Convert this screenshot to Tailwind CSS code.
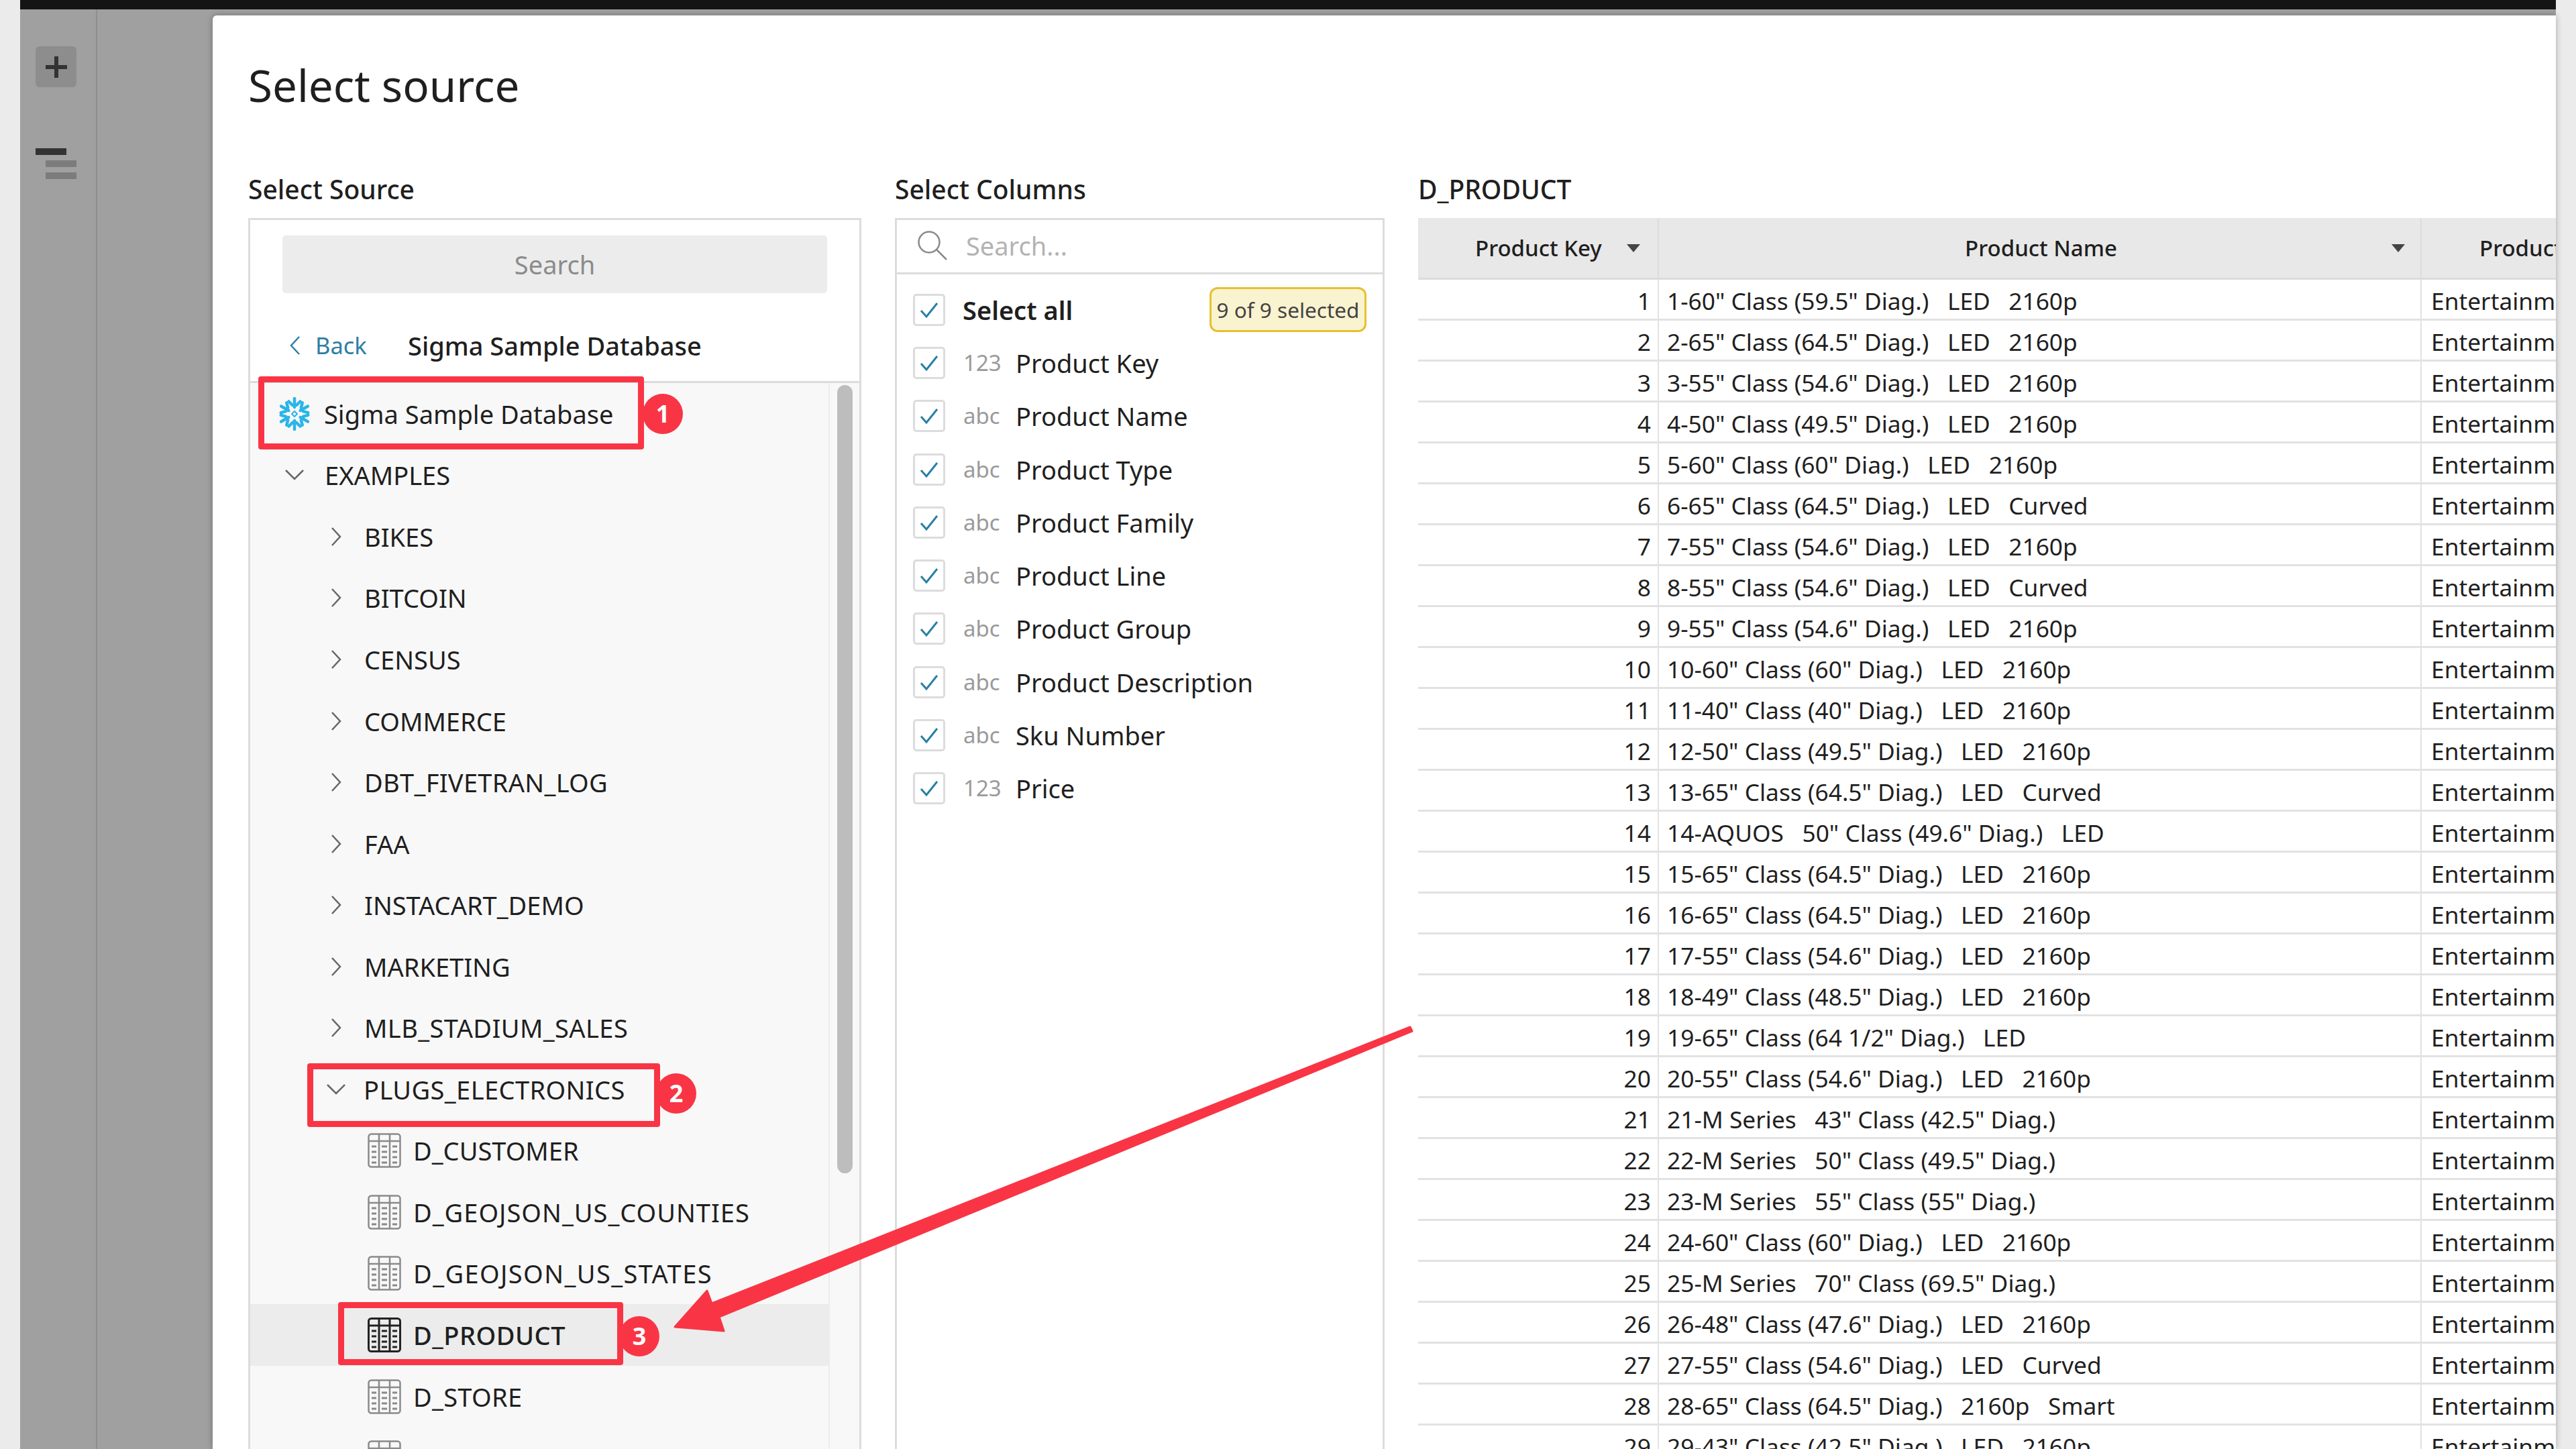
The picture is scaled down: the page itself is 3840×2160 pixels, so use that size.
<!DOCTYPE html>
<html><head><meta charset="utf-8"><script src="https://cdn.jsdelivr.net/npm/@tailwindcss/browser@4"></script></head>
<body class="m-0 bg-[#ebebeb]">
<div class="relative w-[3840px] h-[2160px] overflow-hidden flex bg-[#ebebeb] font-['Noto_Sans',sans-serif] text-[#1f1f1f]">
<div class="w-[30px] shrink-0"></div>
<div class="w-[3780px] flex flex-col">
<div class="h-[14px] bg-[#141414] shrink-0"></div>
<div class="flex-1 flex bg-[#a0a0a0] min-h-0">
<div class="w-[115px] shrink-0 border-r-2 border-[#8f8f8f] pl-[23px] pt-[55px]">
<div class="w-[61px] h-[61px] rounded-[6px] bg-[#8d8d8d] flex items-center justify-center">
<svg width="32" height="32" viewBox="0 0 32 32"><path d="M13 0h6v13h13v6H19v13h-6V19H0v-6h13z" fill="#333"/></svg></div>
<div class="mt-[91px] w-[61px] flex flex-col gap-[8px]"><div class="w-[46px] h-[10px] bg-[#333]"></div><div class="w-[46px] h-[10px] ml-[15px] bg-[#7c7c7c]"></div><div class="w-[46px] h-[10px] ml-[15px] bg-[#7c7c7c]"></div></div>
</div>
<div class="w-[172px] shrink-0"></div>
<div class="w-[3493px] mt-[9px] bg-white rounded-tl-[6px] shadow-[0_0_10px_rgba(0,0,0,0.3)] pl-[53px] overflow-hidden">
<h1 class="h-[227px] pt-[60px] text-[65.5px] leading-[88px] font-normal">Select source</h1>
<div class="flex gap-[50px]">

<section class="w-[914px] shrink-0">
<h2 class="h-[75px] text-[39px] font-medium leading-[64px]">Select Source</h2>
<div class="border-[3px] border-b-0 border-[#dcdcdc]">
<div class="h-[243px] border-b-[3px] border-[#dcdcdc] bg-white">
<div class="pt-[23px] px-[48px]"><div class="h-[86px] rounded-[5px] bg-[#ececec] flex items-center justify-center text-[38px] text-[#8b8b8b]">Search</div></div>
<div class="flex items-center h-[70px] mt-[43px] pl-[58px]">
<svg width="18" height="32" viewBox="0 0 18 32" fill="none" stroke="#2f7fa5" stroke-width="2.5"><path d="M15 3 3 16l12 13"/></svg>
<span class="ml-[21px] w-[138px] text-[34.5px] text-[#2f7fa5]">Back</span>
<span class="text-[38px] font-medium">Sigma Sample Database</span></div>
</div>
<div class="flex h-[1700px] bg-[#f8f8f8]">
<ul class="w-[864px] shrink-0 border-r-[2px] border-[#ececec] text-[38px] leading-[50px]">
<li class="h-[91.56px] flex items-center pl-[41px]"><svg class="mr-[19px]" width="50" height="50" viewBox="-25 -25 50 50" fill="none" stroke="#29b5e8" stroke-width="4.5" stroke-linecap="round"><g id="a"><path d="M0-23V-10M-8.5-18.5-3-13M8.5-18.5 3-13"/></g><use href="#a" transform="rotate(60)"/><use href="#a" transform="rotate(120)"/><use href="#a" transform="rotate(180)"/><use href="#a" transform="rotate(240)"/><use href="#a" transform="rotate(300)"/><path d="M0-4 4 0 0 4-4 0z" stroke-width="2"/></svg>Sigma Sample Database</li>
<li class="h-[91.56px] flex items-center pl-[51px]"><svg class="mr-[30px]" width="30" height="18" viewBox="0 0 30 18" fill="none" stroke="#666" stroke-width="2.5"><path d="M2 2l13 13L28 2"/></svg>EXAMPLES</li>
<li class="h-[91.56px] flex items-center pl-[119px]"><svg class="mr-[33px]" width="18" height="30" viewBox="0 0 18 30" fill="none" stroke="#666" stroke-width="2.5"><path d="M3 2l12 13L3 28"/></svg>BIKES</li>
<li class="h-[91.56px] flex items-center pl-[119px]"><svg class="mr-[33px]" width="18" height="30" viewBox="0 0 18 30" fill="none" stroke="#666" stroke-width="2.5"><path d="M3 2l12 13L3 28"/></svg>BITCOIN</li>
<li class="h-[91.56px] flex items-center pl-[119px]"><svg class="mr-[33px]" width="18" height="30" viewBox="0 0 18 30" fill="none" stroke="#666" stroke-width="2.5"><path d="M3 2l12 13L3 28"/></svg>CENSUS</li>
<li class="h-[91.56px] flex items-center pl-[119px]"><svg class="mr-[33px]" width="18" height="30" viewBox="0 0 18 30" fill="none" stroke="#666" stroke-width="2.5"><path d="M3 2l12 13L3 28"/></svg>COMMERCE</li>
<li class="h-[91.56px] flex items-center pl-[119px] tracking-[0.3px]"><svg class="mr-[33px]" width="18" height="30" viewBox="0 0 18 30" fill="none" stroke="#666" stroke-width="2.5"><path d="M3 2l12 13L3 28"/></svg>DBT_FIVETRAN_LOG</li>
<li class="h-[91.56px] flex items-center pl-[119px]"><svg class="mr-[33px]" width="18" height="30" viewBox="0 0 18 30" fill="none" stroke="#666" stroke-width="2.5"><path d="M3 2l12 13L3 28"/></svg>FAA</li>
<li class="h-[91.56px] flex items-center pl-[119px]"><svg class="mr-[33px]" width="18" height="30" viewBox="0 0 18 30" fill="none" stroke="#666" stroke-width="2.5"><path d="M3 2l12 13L3 28"/></svg>INSTACART_DEMO</li>
<li class="h-[91.56px] flex items-center pl-[119px]"><svg class="mr-[33px]" width="18" height="30" viewBox="0 0 18 30" fill="none" stroke="#666" stroke-width="2.5"><path d="M3 2l12 13L3 28"/></svg>MARKETING</li>
<li class="h-[91.56px] flex items-center pl-[119px] tracking-[0.4px]"><svg class="mr-[33px]" width="18" height="30" viewBox="0 0 18 30" fill="none" stroke="#666" stroke-width="2.5"><path d="M3 2l12 13L3 28"/></svg>MLB_STADIUM_SALES</li>
<li class="h-[91.56px] flex items-center pl-[113px] tracking-[0.4px]"><svg class="mr-[26px]" width="30" height="18" viewBox="0 0 30 18" fill="none" stroke="#666" stroke-width="2.5"><path d="M2 2l13 13L28 2"/></svg>PLUGS_ELECTRONICS</li>
<li class="h-[91.56px] flex items-center pl-[175px]"><svg class="mr-[18px]" width="50" height="52" viewBox="0 0 50 52" fill="none" stroke="#8a8a8a" stroke-width="2.5"><g id="t"><rect x="1.5" y="1.5" width="47" height="49" rx="4"/><path d="M1.5 12h47M17 1.5v49M33 1.5v49"/><path stroke-width="3" d="M6 20h7M21 20h8M37 20h7M6 28h7M21 28h8M37 28h7M6 36h7M21 36h8M37 36h7M6 44h7M21 44h8M37 44h7"/></g></svg>D_CUSTOMER</li>
<li class="h-[91.56px] flex items-center pl-[175px] tracking-[1px]"><svg class="mr-[18px]" width="50" height="52" viewBox="0 0 50 52" fill="none" stroke="#8a8a8a" stroke-width="2.5"><use href="#t"/></svg>D_GEOJSON_US_COUNTIES</li>
<li class="h-[91.56px] flex items-center pl-[175px] tracking-[1.4px]"><svg class="mr-[18px]" width="50" height="52" viewBox="0 0 50 52" fill="none" stroke="#8a8a8a" stroke-width="2.5"><use href="#t"/></svg>D_GEOJSON_US_STATES</li>
<li class="h-[91.56px] flex items-center pl-[175px] bg-[#ececec] font-medium tracking-[0.5px]"><svg class="mr-[18px]" width="50" height="52" viewBox="0 0 50 52" fill="none" stroke="#222" stroke-width="3"><use href="#t"/></svg>D_PRODUCT</li>
<li class="h-[91.56px] flex items-center pl-[175px] tracking-[0.3px]"><svg class="mr-[18px]" width="50" height="52" viewBox="0 0 50 52" fill="none" stroke="#8a8a8a" stroke-width="2.5"><use href="#t"/></svg>D_STORE</li>
<li class="h-[91.56px] flex items-center pl-[175px]"><svg class="mr-[18px]" width="50" height="52" viewBox="0 0 50 52" fill="none" stroke="#8a8a8a" stroke-width="2.5"><use href="#t"/></svg>D_INVENTORY_AS_WATER</li>
</ul>
<div class="flex-1 pt-[3px] pl-[11px]"><div class="w-[23px] h-[1175px] rounded-full bg-[#bdbdbd]"></div></div>
</div>
</div>
</section>

<section class="w-[730px] shrink-0">
<h2 class="h-[75px] text-[39px] font-medium leading-[64px]">Select Columns</h2>
<div class="border-[3px] border-b-0 border-[#dcdcdc] h-[1900px]">
<div class="h-[81px] border-b-[3px] border-[#dcdcdc] flex items-center pl-[30px] pb-[2px]">
<svg width="46" height="46" viewBox="0 0 46 46" fill="none" stroke="#8a8a8a" stroke-width="2.5"><circle cx="18" cy="18" r="15.5"/><path d="M29 29l15 15"/></svg>
<span class="ml-[27px] text-[38px] text-[#b3b3b3]">Search...</span></div>
<ul class="pl-[24px] pt-[13px] text-[38px] leading-[50px]">
<li class="h-[79.3px] flex items-center relative"><span class="w-[48px] h-[48px] border-[3px] border-[#dcdcdc] rounded-[5px] flex items-center justify-center"><svg width="28" height="24" viewBox="0 0 28 24" fill="none" stroke="#2a7fa5" stroke-width="3"><path d="M2 13l8 9L26 2"/></svg></span><span class="ml-[26px] font-semibold">Select all</span><span class="absolute left-[442px] top-[6px] w-[234px] h-[67px] rounded-[12px] bg-[#faf3d0] border-[3px] border-[#e6c12e] flex items-center justify-center text-[31.5px] text-[#444] whitespace-nowrap">9 of 9 selected</span></li>
<li class="h-[79.3px] flex items-center"><span class="w-[48px] h-[48px] border-[3px] border-[#dcdcdc] rounded-[5px] flex items-center justify-center"><svg width="28" height="24" viewBox="0 0 28 24" fill="none" stroke="#2a7fa5" stroke-width="3"><path d="M2 13l8 9L26 2"/></svg></span><span class="ml-[27px] w-[78px] text-[#9a9a9a] text-[33px]">123</span>Product Key</li>
<li class="h-[79.3px] flex items-center"><span class="w-[48px] h-[48px] border-[3px] border-[#dcdcdc] rounded-[5px] flex items-center justify-center"><svg width="28" height="24" viewBox="0 0 28 24" fill="none" stroke="#2a7fa5" stroke-width="3"><path d="M2 13l8 9L26 2"/></svg></span><span class="ml-[27px] w-[78px] text-[#9a9a9a] text-[33px]">abc</span>Product Name</li>
<li class="h-[79.3px] flex items-center"><span class="w-[48px] h-[48px] border-[3px] border-[#dcdcdc] rounded-[5px] flex items-center justify-center"><svg width="28" height="24" viewBox="0 0 28 24" fill="none" stroke="#2a7fa5" stroke-width="3"><path d="M2 13l8 9L26 2"/></svg></span><span class="ml-[27px] w-[78px] text-[#9a9a9a] text-[33px]">abc</span>Product Type</li>
<li class="h-[79.3px] flex items-center"><span class="w-[48px] h-[48px] border-[3px] border-[#dcdcdc] rounded-[5px] flex items-center justify-center"><svg width="28" height="24" viewBox="0 0 28 24" fill="none" stroke="#2a7fa5" stroke-width="3"><path d="M2 13l8 9L26 2"/></svg></span><span class="ml-[27px] w-[78px] text-[#9a9a9a] text-[33px]">abc</span>Product Family</li>
<li class="h-[79.3px] flex items-center"><span class="w-[48px] h-[48px] border-[3px] border-[#dcdcdc] rounded-[5px] flex items-center justify-center"><svg width="28" height="24" viewBox="0 0 28 24" fill="none" stroke="#2a7fa5" stroke-width="3"><path d="M2 13l8 9L26 2"/></svg></span><span class="ml-[27px] w-[78px] text-[#9a9a9a] text-[33px]">abc</span>Product Line</li>
<li class="h-[79.3px] flex items-center"><span class="w-[48px] h-[48px] border-[3px] border-[#dcdcdc] rounded-[5px] flex items-center justify-center"><svg width="28" height="24" viewBox="0 0 28 24" fill="none" stroke="#2a7fa5" stroke-width="3"><path d="M2 13l8 9L26 2"/></svg></span><span class="ml-[27px] w-[78px] text-[#9a9a9a] text-[33px]">abc</span>Product Group</li>
<li class="h-[79.3px] flex items-center"><span class="w-[48px] h-[48px] border-[3px] border-[#dcdcdc] rounded-[5px] flex items-center justify-center"><svg width="28" height="24" viewBox="0 0 28 24" fill="none" stroke="#2a7fa5" stroke-width="3"><path d="M2 13l8 9L26 2"/></svg></span><span class="ml-[27px] w-[78px] text-[#9a9a9a] text-[33px]">abc</span>Product Description</li>
<li class="h-[79.3px] flex items-center"><span class="w-[48px] h-[48px] border-[3px] border-[#dcdcdc] rounded-[5px] flex items-center justify-center"><svg width="28" height="24" viewBox="0 0 28 24" fill="none" stroke="#2a7fa5" stroke-width="3"><path d="M2 13l8 9L26 2"/></svg></span><span class="ml-[27px] w-[78px] text-[#9a9a9a] text-[33px]">abc</span>Sku Number</li>
<li class="h-[79.3px] flex items-center"><span class="w-[48px] h-[48px] border-[3px] border-[#dcdcdc] rounded-[5px] flex items-center justify-center"><svg width="28" height="24" viewBox="0 0 28 24" fill="none" stroke="#2a7fa5" stroke-width="3"><path d="M2 13l8 9L26 2"/></svg></span><span class="ml-[27px] w-[78px] text-[#9a9a9a] text-[33px]">123</span>Price</li>
</ul>
</div>
</section>

<section class="flex-1 min-w-0 overflow-hidden">
<h2 class="h-[75px] text-[39px] font-medium leading-[64px]">D_PRODUCT</h2>
<div class="w-[2000px] leading-[44px]">
<div class="flex h-[92px] bg-[#e8e8e8] border-b-[3px] border-[#dcdcdc] font-medium text-[33px]">
<div class="w-[359px] shrink-0 border-r-2 border-[#dcdcdc] flex items-center pl-[85px]">Product Key<svg class="ml-[37px]" width="20" height="12" viewBox="0 0 20 12"><path d="M0 0h20L10 12z" fill="#444"/></svg></div>
<div class="w-[1137px] shrink-0 border-r-2 border-[#dcdcdc] flex items-center relative"><span class="w-full text-center pl-[4px]">Product Name</span><svg class="absolute left-[1092px]" width="20" height="12" viewBox="0 0 20 12"><path d="M0 0h20L10 12z" fill="#444"/></svg></div>
<div class="pl-[86px] flex items-center">Product Type</div></div>
<div class="grid grid-cols-[359px_1137px_504px] auto-rows-[61px] text-[35.3px] [&>div]:flex [&>div]:items-center [&>div]:pt-[4px] [&>div]:border-b-[3px] [&>div]:border-[#e2e2e2] [&>div:not(:nth-child(3n))]:border-r-2 [&>div:nth-child(3n+1)]:justify-end [&>div:nth-child(3n+1)]:pr-[10px] [&>div:nth-child(3n+2)]:pl-[12px] [&>div:nth-child(3n+2)]:whitespace-pre [&>div:nth-child(3n)]:pl-[14px]">
<div>1</div><div>1-60" Class (59.5" Diag.)   LED   2160p</div><div>Entertainment</div>
<div>2</div><div>2-65" Class (64.5" Diag.)   LED   2160p</div><div>Entertainment</div>
<div>3</div><div>3-55" Class (54.6" Diag.)   LED   2160p</div><div>Entertainment</div>
<div>4</div><div>4-50" Class (49.5" Diag.)   LED   2160p</div><div>Entertainment</div>
<div>5</div><div>5-60" Class (60" Diag.)   LED   2160p</div><div>Entertainment</div>
<div>6</div><div>6-65" Class (64.5" Diag.)   LED   Curved</div><div>Entertainment</div>
<div>7</div><div>7-55" Class (54.6" Diag.)   LED   2160p</div><div>Entertainment</div>
<div>8</div><div>8-55" Class (54.6" Diag.)   LED   Curved</div><div>Entertainment</div>
<div>9</div><div>9-55" Class (54.6" Diag.)   LED   2160p</div><div>Entertainment</div>
<div>10</div><div>10-60" Class (60" Diag.)   LED   2160p</div><div>Entertainment</div>
<div>11</div><div>11-40" Class (40" Diag.)   LED   2160p</div><div>Entertainment</div>
<div>12</div><div>12-50" Class (49.5" Diag.)   LED   2160p</div><div>Entertainment</div>
<div>13</div><div>13-65" Class (64.5" Diag.)   LED   Curved</div><div>Entertainment</div>
<div>14</div><div>14-AQUOS   50" Class (49.6" Diag.)   LED</div><div>Entertainment</div>
<div>15</div><div>15-65" Class (64.5" Diag.)   LED   2160p</div><div>Entertainment</div>
<div>16</div><div>16-65" Class (64.5" Diag.)   LED   2160p</div><div>Entertainment</div>
<div>17</div><div>17-55" Class (54.6" Diag.)   LED   2160p</div><div>Entertainment</div>
<div>18</div><div>18-49" Class (48.5" Diag.)   LED   2160p</div><div>Entertainment</div>
<div>19</div><div>19-65" Class (64 1/2" Diag.)   LED</div><div>Entertainment</div>
<div>20</div><div>20-55" Class (54.6" Diag.)   LED   2160p</div><div>Entertainment</div>
<div>21</div><div>21-M Series   43" Class (42.5" Diag.)</div><div>Entertainment</div>
<div>22</div><div>22-M Series   50" Class (49.5" Diag.)</div><div>Entertainment</div>
<div>23</div><div>23-M Series   55" Class (55" Diag.)</div><div>Entertainment</div>
<div>24</div><div>24-60" Class (60" Diag.)   LED   2160p</div><div>Entertainment</div>
<div>25</div><div>25-M Series   70" Class (69.5" Diag.)</div><div>Entertainment</div>
<div>26</div><div>26-48" Class (47.6" Diag.)   LED   2160p</div><div>Entertainment</div>
<div>27</div><div>27-55" Class (54.6" Diag.)   LED   Curved</div><div>Entertainment</div>
<div>28</div><div>28-65" Class (64.5" Diag.)   2160p   Smart</div><div>Entertainment</div>
<div>29</div><div>29-43" Class (42.5" Diag.)   LED   2160p</div><div>Entertainment</div>
</div>
</div>
</section>
</div></div></div>
</div>
<div class="w-[30px] shrink-0"></div>

<div class="absolute left-[385px] top-[561px] w-[575px] h-[109px] border-[9px] border-[#f93545] rounded-[4px]"></div>
<div class="absolute left-[958px] top-[587px] w-[60px] h-[60px] rounded-full bg-[#f93545] text-white font-bold text-[36px] flex items-center justify-center">1</div>
<div class="absolute left-[458px] top-[1585px] w-[526px] h-[95px] border-[9px] border-[#f93545] rounded-[4px]"></div>
<div class="absolute left-[978px] top-[1600px] w-[60px] h-[60px] rounded-full bg-[#f93545] text-white font-bold text-[36px] flex items-center justify-center">2</div>
<div class="absolute left-[504px] top-[1941px] w-[425px] h-[94px] border-[9px] border-[#f93545] rounded-[4px]"></div>
<div class="absolute left-[923px] top-[1962px] w-[60px] h-[60px] rounded-full bg-[#f93545] text-white font-bold text-[36px] flex items-center justify-center">3</div>
<svg class="absolute left-0 top-0" width="3840" height="2160" viewBox="0 0 3840 2160"><path d="M2102 1531 2105 1537 1072 1963 1079 1984 1006 1978 1054 1924 1061 1943Z" fill="#f93545" stroke="#f93545" stroke-width="3" stroke-linejoin="round"/></svg>
</div>
</body></html>
